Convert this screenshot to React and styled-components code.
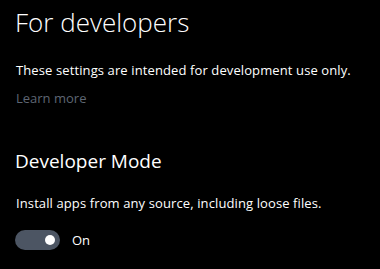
import React from "react";
import styled, { createGlobalStyle } from "styled-components";

const Global = createGlobalStyle`
  html, body { margin: 0; padding: 0; background: #000; }
  body { font-family: "Open Sans", "Noto Sans", sans-serif; color: #fff; }
`;

const Page = styled.div`
  width: 380px;
  height: 269px;
  box-sizing: border-box;
  padding: 4px 16px 0 16px;
  background: #000;
  display: flex;
  flex-direction: column;
  overflow: hidden;
`;

const Title = styled.h1`
  margin: 0;
  font-size: 26px;
  line-height: 36px;
  font-weight: 300;
  margin-left: -1px;
`;

const Body = styled.p`
  margin: ${(p) => p.$top}px 0 0 0;
  font-size: 13px;
  line-height: 20px;
  font-weight: 400;
  letter-spacing: 0.11px;
  color: #fff;
`;

const Link = styled.a`
  margin-top: 8px;
  font-size: 13px;
  line-height: 20px;
  color: #5e6673;
  text-decoration: none;
`;

const SubTitle = styled.h2`
  margin: 39px 0 0 -1px;
  font-size: 19px;
  line-height: 28px;
  font-weight: 400;
`;

const ToggleRow = styled.div`
  margin-top: 16px;
  display: flex;
  align-items: center;
  gap: 12px;
  height: 21px;
`;

const Track = styled.div`
  width: 45px;
  height: 20px;
  margin-left: -1px;
  border-radius: 10px;
  background: #4c5563;
  display: flex;
  align-items: center;
  justify-content: flex-end;
  padding: 0 5px;
  box-sizing: border-box;
`;

const Knob = styled.div`
  width: 10px;
  height: 10px;
  border-radius: 50%;
  background: #fff;
`;

const ToggleLabel = styled.span`
  font-size: 13px;
  line-height: 20px;
`;

export default function App() {
  return (
    <>
      <Global />
      <Page>
        <Title>For developers</Title>
        <Body $top={20}>These settings are intended for development use only.</Body>
        <Link href="#">Learn more</Link>
        <SubTitle>Developer Mode</SubTitle>
        <Body $top={18}>Install apps from any source, including loose files.</Body>
        <ToggleRow>
          <Track>
            <Knob />
          </Track>
          <ToggleLabel>On</ToggleLabel>
        </ToggleRow>
      </Page>
    </>
  );
}
